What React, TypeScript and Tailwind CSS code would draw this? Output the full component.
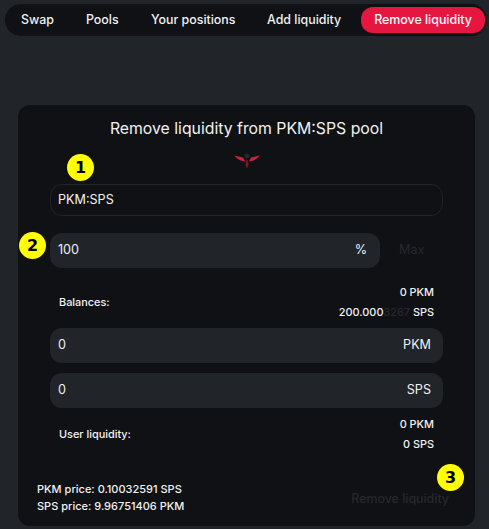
import React from "react";

const Badge = ({ n, className }: { n: number; className: string }) => (
  <span className={`absolute flex h-[27px] w-[27px] items-center justify-center rounded-full bg-[#ffff00] font-['DejaVu_Sans',sans-serif] text-[16px] font-bold text-black ${className}`}>
    {n}
  </span>
);

const AmountRow = ({ value, unit }: { value: string; unit: string }) => (
  <div className="flex h-[35px] items-center justify-between rounded-xl bg-[#212429] pl-2 pr-[12px] text-[12.6px] font-normal text-[#f0f1f3]">
    <span>{value}</span>
    <span>{unit}</span>
  </div>
);

const Logo = () => (
  <svg width="26" height="16" viewBox="0 0 26 16" className="mx-auto">
    <circle cx="13" cy="3" r="2.5" fill="#26272c" />
    <path d="M0 2.5 L9 4.5 L11 8.5 Q5 8 0 2.5Z" fill="#d81b3f" />
    <path d="M26 2.5 L17 4.5 L15 8.5 Q21 8 26 2.5Z" fill="#d81b3f" />
    <path d="M13 6.5 Q16 10 13 15.5 Q10 10 13 6.5Z" fill="#7c1529" />
  </svg>
);

export default function App() {
  return (
    <div className="h-[529px] w-[489px] overflow-hidden bg-[#212429] pt-[4px] font-['Inter',sans-serif] text-[#f0f1f3]">
      <nav className="ml-[5px] flex h-[32px] w-[482px] items-center whitespace-nowrap rounded-2xl bg-[#101114] pr-[2px] text-[12.4px] font-medium">
        <span className="ml-[16px] w-[33px]">Swap</span>
        <span className="ml-[32px] w-[33px]">Pools</span>
        <span className="ml-[32px] w-[84px]">Your positions</span>
        <span className="ml-[32px] w-[75px]">Add liquidity</span>
        <span className="ml-[19px] flex h-[26px] w-[124px] items-center justify-center rounded-xl bg-[#e5163f] text-white">
          Remove liquidity
        </span>
      </nav>

      <main className="relative ml-[18px] mt-[69px] h-[421px] w-[457px] rounded-xl bg-[#101114] pl-[32px] pr-[32px] pt-[14px]">
        <h1 className="text-center text-[15.8px] font-normal leading-[20px]">Remove liquidity from PKM:SPS pool</h1>
        <div className="mt-[14px]">
          <Logo />
        </div>

        <div className="mt-[15px] flex h-[32px] items-center rounded-xl border border-[#212429] pl-[7px] text-[12.6px] font-normal">
          PKM:SPS
        </div>

        <div className="mt-[17px] flex items-center">
          <div className="flex h-[35px] w-[330px] items-center justify-between rounded-xl bg-[#212429] pl-2 pr-[13px] text-[12.6px] font-normal">
            <span>100</span>
            <span>%</span>
          </div>
          <span className="ml-[19px] text-[12.6px] font-normal text-[#26282d]">Max</span>
        </div>

        <div className="mt-[14px] flex items-center justify-between pl-[9px] pr-[9px] text-[10.9px] font-medium">
          <span>Balances:</span>
          <div className="text-right leading-[20px]">
            <div>0 PKM</div>
            <div>
              200.000<span className="text-[#26282d]">3267</span> SPS
            </div>
          </div>
        </div>

        <div className="mt-[6px] flex flex-col gap-[10px]">
          <AmountRow value="0" unit="PKM" />
          <AmountRow value="0" unit="SPS" />
        </div>

        <div className="mt-[6px] flex items-center justify-between pl-[9px] pr-[9px] text-[10.9px] font-medium">
          <span>User liquidity:</span>
          <div className="text-right leading-[20px]">
            <div>0 PKM</div>
            <div>0 SPS</div>
          </div>
        </div>

        <div className="absolute bottom-[11px] left-[19px] text-[11px] font-medium leading-[17px]">
          <div>PKM price: 0.10032591 SPS</div>
          <div>SPS price: 9.96751406 PKM</div>
        </div>
        <span className="absolute bottom-[17px] right-[26px] text-[12.4px] font-medium text-[#26282d]">Remove liquidity</span>

        <Badge n={1} className="left-[49px] top-[49px]" />
        <Badge n={2} className="left-[1px] top-[127px]" />
        <Badge n={3} className="left-[419px] top-[359px]" />
      </main>
    </div>
  );
}
